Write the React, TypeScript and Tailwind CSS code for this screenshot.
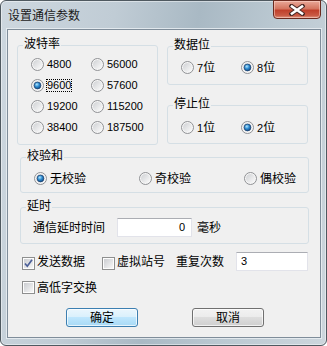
import React from 'react';

const font = { fontFamily: '"Liberation Sans", "Noto Sans CJK SC", sans-serif' };

const Radio: React.FC<{ checked?: boolean }> = ({ checked }) => (
  <svg width="13" height="13" viewBox="0 0 13 13" className="shrink-0">
    <defs>
      <linearGradient id="rfill" x1="0" y1="0" x2="1" y2="1">
        <stop offset="0" stopColor="#cfd1d4" />
        <stop offset="1" stopColor="#fbfbfb" />
      </linearGradient>
      <radialGradient id="rdot" cx="0.4" cy="0.35" r="0.75">
        <stop offset="0" stopColor="#b3e6fd" />
        <stop offset="0.45" stopColor="#2c8bd0" />
        <stop offset="1" stopColor="#0b3a74" />
      </radialGradient>
    </defs>
    <circle cx="6.5" cy="6.5" r="6" fill="#f6f6f6" stroke="#8f9194" />
    <circle cx="6.5" cy="6.5" r="4.5" fill="url(#rfill)" />
    {checked && <circle cx="6.5" cy="6.5" r="3.4" fill="url(#rdot)" stroke="#1c3f6b" strokeWidth="0.7" />}
  </svg>
);

const Check: React.FC<{ checked?: boolean }> = ({ checked }) => (
  <svg width="13" height="13" viewBox="0 0 13 13" className="shrink-0">
    <defs>
      <linearGradient id="cfill" x1="0" y1="0" x2="1" y2="1">
        <stop offset="0" stopColor="#cbcdd1" />
        <stop offset="1" stopColor="#f7f7f7" />
      </linearGradient>
    </defs>
    <rect x="0.5" y="0.5" width="12" height="12" fill="#fdfdfd" stroke="#8e8f8f" />
    <rect x="2" y="2" width="9" height="9" fill="url(#cfill)" />
    {checked && (
      <path d="M3 6.5 L5.3 9.2 L10 2.8" fill="none" stroke="#4b5f98" strokeWidth="1.7" />
    )}
  </svg>
);

const Group: React.FC<{ title: string; className?: string; children?: React.ReactNode }> = ({
  title,
  className,
  children,
}) => (
  <div className={`relative rounded-[3px] border border-[#d5dfe5] ${className ?? ''}`}>
    <span className="absolute left-[5px] top-[-10px] bg-[#f0f0f0] px-[1px] text-[12px] leading-[16px]">
      {title}
    </span>
    {children}
  </div>
);

const Num: React.FC<{ children: React.ReactNode; focus?: boolean }> = ({ children, focus }) => (
  <span
    className={`text-[11px] leading-[11px] ${
      focus ? 'inline-block -ml-[1px] border border-dotted border-black px-0 leading-[11px]' : ''
    }`}
  >
    {children}
  </span>
);

const RadioItem: React.FC<{ checked?: boolean; children: React.ReactNode }> = ({ checked, children }) => (
  <div className="flex h-[21px] items-center gap-[3px]">
    <Radio checked={checked} />
    {children}
  </div>
);

const Button: React.FC<{ primary?: boolean; children: React.ReactNode }> = ({ primary, children }) => (
  <div
    className={`flex h-[19px] w-[72px] items-center justify-center rounded-[3px] border text-[12px] leading-none shadow-[inset_0_0_0_1px_rgba(255,255,255,0.7)] ${
      primary
        ? 'border-[#3c7fb1] bg-[linear-gradient(#eaf6fd_0%,#d9f0fc_50%,#bee6fd_50%,#a7d9f5_100%)]'
        : 'border-[#707070] bg-[linear-gradient(#f2f2f2_0%,#ebebeb_50%,#dddddd_50%,#cfcfcf_100%)]'
    }`}
  >
    {children}
  </div>
);

export default function App() {
  return (
    <div style={font} className="h-[346px] w-[327px] bg-white text-black">
      <div className="relative flex h-full w-full flex-col rounded-[6px] border border-[#4f5960] bg-[linear-gradient(100deg,#cdd7df_0%,#c0ccd5_30%,#a9b9c4_52%,#bac8d1_72%,#cdd6dd_100%)] pb-[7px] pl-[6px] pr-[5px] shadow-[inset_0_0_0_1px_rgba(255,255,255,0.45)]">
        {/* title bar */}
        <div className="flex h-[28px] shrink-0 items-center pl-[1px] pt-[1px] text-[12px] text-[#1b1b1b]">
          设置通信参数
        </div>
        <div className="absolute right-[5px] top-[-1px] flex h-[19px] w-[48px] items-center justify-center rounded-b-[4px] border border-[#6b2a1f] bg-[linear-gradient(#e9a898_0%,#d47560_45%,#c0402b_55%,#c95a44_85%,#e09a86_100%)] shadow-[inset_0_0_0_1px_rgba(255,220,210,0.5)]">
          <svg width="16" height="12" viewBox="0 0 16 12">
            <path d="M2.5 2 L13.5 10 M13.5 2 L2.5 10" stroke="#4a2a26" strokeWidth="4.4" strokeLinecap="square" />
            <path d="M3 2.5 L13 9.5 M13 2.5 L3 9.5" stroke="#ffffff" strokeWidth="2.6" strokeLinecap="square" />
          </svg>
        </div>

        {/* client area */}
        <div className="flex flex-1 flex-col border border-[#7f8d9a] bg-[#f0f0f0] shadow-[0_0_0_1px_rgba(235,240,244,0.8)]">
          <div className="mt-[15px] flex">
            <Group title="波特率" className="ml-[9px] h-[100px] w-[141px]">
              <div className="grid grid-cols-[60px_60px] pl-[13px] pt-[8px]">
                <RadioItem><Num>4800</Num></RadioItem>
                <RadioItem><Num>56000</Num></RadioItem>
                <RadioItem checked><Num focus>9600</Num></RadioItem>
                <RadioItem><Num>57600</Num></RadioItem>
                <RadioItem><Num>19200</Num></RadioItem>
                <RadioItem><Num>115200</Num></RadioItem>
                <RadioItem><Num>38400</Num></RadioItem>
                <RadioItem><Num>187500</Num></RadioItem>
              </div>
            </Group>
            <div className="ml-[9px] flex w-[141px] flex-col">
              <Group title="数据位" className="mt-[1px] h-[39px]">
                <div className="grid grid-cols-[60px_60px] pl-[13px] pt-[10px] text-[12px]">
                  <RadioItem><span><Num>7</Num>位</span></RadioItem>
                  <RadioItem checked><span><Num>8</Num>位</span></RadioItem>
                </div>
              </Group>
              <Group title="停止位" className="mt-[20px] h-[39px]">
                <div className="grid grid-cols-[60px_60px] pl-[13px] pt-[11px] text-[12px]">
                  <RadioItem><span><Num>1</Num>位</span></RadioItem>
                  <RadioItem checked><span><Num>2</Num>位</span></RadioItem>
                </div>
              </Group>
            </div>
          </div>

          <Group title="校验和" className="ml-[12px] mt-[12px] h-[36px] w-[289px]">
            <div className="grid grid-cols-[105px_105px_70px] pl-[13px] pt-[10px] text-[12px]">
              <RadioItem checked>无校验</RadioItem>
              <RadioItem>奇校验</RadioItem>
              <RadioItem>偶校验</RadioItem>
            </div>
          </Group>

          <Group title="延时" className="ml-[12px] mt-[14px] h-[37px] w-[289px]">
            <div className="flex items-center pl-[12px] pt-[10px] text-[12px]">
              <span className="w-[84px]">通信延时时间</span>
              <div className="flex h-[19px] w-[75px] items-center justify-end border border-[#e2e3ea] border-t-[#abadb3] bg-white pr-[6px]">
                <Num>0</Num>
              </div>
              <span className="ml-[5px]">毫秒</span>
            </div>
          </Group>

          <div className="ml-[14px] mt-[8px] flex h-[19px] items-center text-[12px]">
            <div className="mt-[3px]"><Check checked /></div>
            <span className="ml-[2px] mt-[1px]">发送数据</span>
            <div className="ml-[17px] mt-[3px]"><Check /></div>
            <span className="ml-[2px] mt-[1px]">虚拟站号</span>
            <span className="ml-[11px]">重复次数</span>
            <div className="ml-[12px] flex h-[19px] w-[72px] items-center border border-[#e2e3ea] border-t-[#abadb3] bg-white pl-[4px]">
              <Num>3</Num>
            </div>
          </div>

          <div className="ml-[14px] mt-[10px] flex h-[13px] items-center text-[12px]">
            <Check />
            <span className="ml-[2px]">高低字交换</span>
          </div>

          <div className="ml-[58px] mt-[14px] flex">
            <Button primary>确定</Button>
            <div className="ml-[54px]">
              <Button>取消</Button>
            </div>
          </div>
        </div>
      </div>
    </div>
  );
}
